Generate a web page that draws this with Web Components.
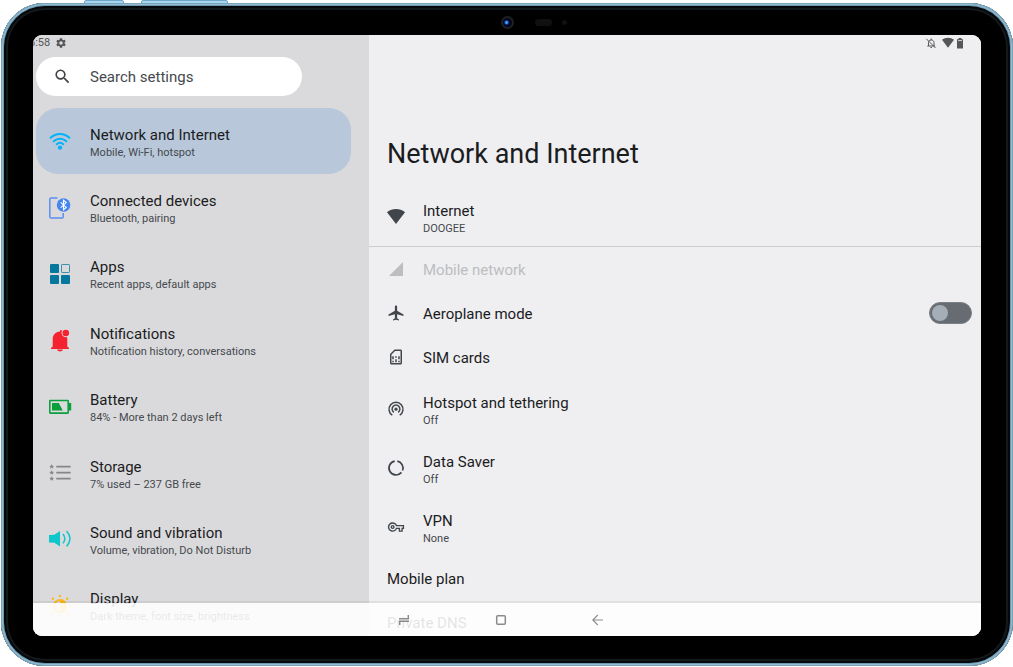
<!DOCTYPE html>
<html lang="en">
<head>
<meta charset="utf-8">
<meta name="viewport" content="width=device-width, initial-scale=1">
<title>Settings – Network and Internet</title>
<style>
  html, body { margin: 0; height: 100%; background: #fff; }
  body { font-family: Roboto, "Liberation Sans", sans-serif; color: #1b1c1e; overflow: hidden; }
</style>
</head>
<body>
<tablet-frame>
  <status-bar></status-bar>
  <settings-sidebar>
    <search-box></search-box>
    <category-item icon="wifi" heading="Network and Internet" note="Mobile, Wi-Fi, hotspot" selected></category-item>
    <category-item icon="devices" heading="Connected devices" note="Bluetooth, pairing"></category-item>
    <category-item icon="apps" heading="Apps" note="Recent apps, default apps"></category-item>
    <category-item icon="bell" heading="Notifications" note="Notification history, conversations"></category-item>
    <category-item icon="battery" heading="Battery" note="84% - More than 2 days left"></category-item>
    <category-item icon="storage" heading="Storage" note="7% used – 237 GB free"></category-item>
    <category-item icon="sound" heading="Sound and vibration" note="Volume, vibration, Do Not Disturb"></category-item>
    <category-item icon="display" heading="Display" note="Dark theme, font size, brightness"></category-item>
  </settings-sidebar>
  <settings-pane>
    <span slot="title">Network and Internet</span>
    <setting-row icon="internet" heading="Internet" note="DOOGEE" divider></setting-row>
    <setting-row icon="signal" heading="Mobile network" disabled></setting-row>
    <setting-switch icon="plane" heading="Aeroplane mode"></setting-switch>
    <setting-row icon="sim" heading="SIM cards"></setting-row>
    <setting-row icon="hotspot" heading="Hotspot and tethering" note="Off"></setting-row>
    <setting-row icon="data" heading="Data Saver" note="Off"></setting-row>
    <setting-row icon="vpn" heading="VPN" note="None"></setting-row>
    <setting-row heading="Mobile plan"></setting-row>
    <setting-row heading="Private DNS"></setting-row>
  </settings-pane>
  <nav-bar></nav-bar>
</tablet-frame>

<script>
const star = (y) => `<path fill="#868688" d="M3.7 ${y - 2.5}l.7 1.7 1.8.1-1.4 1.1.5 1.8-1.6-1-1.6 1 .5-1.8-1.4-1.1 1.8-.1z"/>`;

/* name: [viewBox size, markup] */
const ICONS = {
  gear: [24, '<path fill="currentColor" d="M19.14 12.94c.04-.3.06-.61.06-.94 0-.32-.02-.64-.07-.94l2.03-1.58c.18-.14.23-.41.12-.61l-1.92-3.32c-.12-.22-.37-.29-.59-.22l-2.39.96c-.5-.38-1.03-.7-1.62-.94l-.36-2.54c-.04-.24-.24-.41-.48-.41h-3.84c-.24 0-.43.17-.47.41l-.36 2.54c-.59.24-1.13.57-1.62.94l-2.39-.96c-.22-.08-.47 0-.59.22L2.74 8.87c-.12.21-.08.47.12.61l2.03 1.58c-.05.3-.09.63-.09.94s.02.64.07.94l-2.03 1.58c-.18.14-.23.41-.12.61l1.92 3.32c.12.22.37.29.59.22l2.39-.96c.5.38 1.03.7 1.62.94l.36 2.54c.05.24.24.41.48.41h3.84c.24 0 .44-.17.47-.41l.36-2.54c.59-.24 1.13-.56 1.62-.94l2.39.96c.22.08.47 0 .59-.22l1.92-3.32c.12-.22.07-.47-.12-.61l-2.01-1.58zM12 15.6a3.6 3.6 0 1 1 0-7.2 3.6 3.6 0 0 1 0 7.2z"/>'],
  search: [24, '<path fill="currentColor" d="M15.5 14h-.79l-.28-.27A6.47 6.47 0 0 0 16 9.5 6.5 6.5 0 1 0 9.5 16c1.61 0 3.09-.59 4.23-1.57l.27.28v.79l5 4.99L20.49 19l-4.99-5zm-6 0C7.01 14 5 11.99 5 9.5S7.01 5 9.5 5 14 7.01 14 9.5 11.99 14 9.5 14z"/>'],
  bellOff: [12, '<g fill="none" stroke="currentColor" stroke-width="1"><path d="M3.500 9V5.600C3.500 4 4.600 3 6.200 3S9 4 9 5.600V9M2.300 9h7.800M6.200 1.500V3M1.300 1.800l9.200 9.200"/></g><path fill="currentColor" d="M5.200 9.900h2a1 1 0 0 1-2 0z"/>'],
  statusBattery: [12, '<path fill="currentColor" d="M4.5 1h3v1.2H9v9.3H3V2.2h1.500z"/><path stroke="#efeff1" stroke-width=".8" d="M4 3.600h4"/>'],
  internet: [18, '<path fill="currentColor" d="M9 16L0 4.300C5 0 13 0 18 4.300z"/>'],
  wifi: [24, '<g fill="none" stroke="#03b3fa" stroke-width="2" stroke-linecap="round"><path d="M2.600 8.800c5.400-5.200 13.400-5.200 18.800 0M5.600 12.300c3.700-3.500 9.100-3.500 12.800 0M8.700 15.200c1.900-1.700 4.700-1.700 6.600 0"/></g><circle cx="12" cy="18.600" r="2.200" fill="#03b3fa"/>'],
  devices: [24, '<path fill="none" stroke="#5b8def" stroke-width="1.500" d="M9.500 1.900H3.200a1.400 1.400 0 0 0-1.400 1.400v17.400a1.400 1.400 0 0 0 1.400 1.400h10.600a1.400 1.400 0 0 0 1.400-1.400V17"/><circle cx="15.600" cy="9" r="6.800" fill="#4585f2"/><path fill="none" stroke="#fff" stroke-width="1.100" d="M12.700 6.400l5.500 5-2.700 2.300V4.300l2.700 2.300-5.500 5"/>'],
  apps: [24, '<g fill="#06779d"><rect x="2" y="2" width="9" height="9" rx="1"/><rect x="2" y="13" width="9" height="9" rx="1"/><rect x="13" y="13" width="9" height="9" rx="1"/></g><rect x="13.500" y="2.500" width="8" height="8" rx=".6" fill="none" stroke="#3d8fae"/>'],
  bell: [24, '<path fill="#f5222f" d="M12 3.500c-.2-1.800 1.700-2 2-.9a4.500 4.500 0 0 0 4.900 6.500c.3.500.4 1.200.4 2v7.400l1.700 1.600v.8H3v-.8l1.700-1.600V11c0-4 2.600-7 7.300-7.500zM9 21.600h6c-.6 1.500-1.700 1.900-3 1.900s-2.400-.4-3-1.900z"/><circle cx="17.800" cy="5" r="3.300" fill="#f5222f"/>'],
  battery: [24, '<rect x="1.800" y="5.500" width="18.400" height="12.600" rx=".5" fill="none" stroke="#0a9f3c" stroke-width="1.600"/><path fill="#0a9f3c" d="M20.500 8h2.700v7.600h-2.700zM4 7.900h6.800l4 7.700H4z"/>'],
  storage: [24, '<path stroke="#868688" stroke-width="1.700" d="M8.300 5.600h14.400M8.300 11.600h14.400M8.300 17.600h14.400"/>' + star(5.6) + star(11.6) + star(17.6)],
  sound: [24, '<path fill="#0fc6cb" d="M1 8l5.400-.3L12 4v15.400l-5.600-3.700L1 15.400z"/><g fill="none" stroke="#0fc6cb" stroke-width="1.500"><path d="M15 7c2.300 3 2.300 6.400 0 9.400M18.600 4c4.200 4.800 4.200 10.600 0 15.400"/></g>'],
  display: [24, '<g fill="#fbb91c"><circle cx="12" cy="2" r="1.200"/><circle cx="4.800" cy="4.700" r="1.200"/><circle cx="19.200" cy="4.700" r="1.200"/><circle cx="2" cy="12" r="1.200"/><circle cx="22" cy="12" r="1.200"/><circle cx="4.800" cy="19.300" r="1.200"/><circle cx="19.200" cy="19.300" r="1.200"/><circle cx="12" cy="22" r="1.200"/><path d="M12 5a7 7 0 0 1 0 14z"/></g><circle cx="12" cy="12" r="6" fill="none" stroke="#fbb91c" stroke-width="2"/>'],
  signal: [18, '<path fill="currentColor" d="M16 2v14H2z"/>'],
  plane: [24, '<path fill="currentColor" d="M22 16v-2l-8.500-5V3.500C13.500 2.670 12.830 2 12 2s-1.500.67-1.500 1.500V9L2 14v2l8.500-2.500V19L8 20.500V22l4-1 4 1v-1.500L13.500 19v-5.500L22 16z"/>'],
  sim: [24, '<path fill="currentColor" d="M18 2h-8L4 8v12c0 1.100.9 2 2 2h12c1.100 0 2-.9 2-2V4c0-1.100-.9-2-2-2zm0 18H6V8.830L10.830 4H18v16zM7 17h2v2H7zM15 17h2v2h-2zM7 11h2v4H7zM11 15h2v4h-2zM11 11h2v2h-2zM15 11h2v4h-2z"/>'],
  hotspot: [18, '<g fill="none" stroke="currentColor" stroke-width="1.500"><path d="M5.300 15.200a7 7 0 1 1 7.400 0M6.900 12.300a3.900 3.900 0 1 1 4.200 0"/></g><circle cx="9" cy="9.200" r="1.600" fill="currentColor"/>'],
  data: [18, '<g fill="none" stroke="currentColor" stroke-width="1.700"><path d="M10.300 2.100a7 7 0 0 1 5.200 9.400M14.400 13.400a7 7 0 1 1-6.700-11.300"/></g>'],
  vpn: [24, '<path fill="currentColor" d="M22 19h-6v-4h-2.680c-1.140 2.420-3.600 4-6.320 4-3.860 0-7-3.140-7-7s3.140-7 7-7c2.720 0 5.170 1.580 6.320 4H24v6h-2v4zm-4-2h2v-4h2v-2H11.940l-.23-.67C11.010 8.340 9.110 7 7 7c-2.760 0-5 2.240-5 5s2.240 5 5 5c2.110 0 4.010-1.340 4.710-3.330l.23-.67H18v4zM7 15c-1.650 0-3-1.350-3-3s1.350-3 3-3 3 1.350 3 3-1.350 3-3 3zm0-4c-.55 0-1 .45-1 1s.45 1 1 1 1-.45 1-1-.45-1-1-1z" transform="translate(1.200 1.200) scale(.9)"/>'],
  recents: [12, '<g fill="none" stroke="currentColor" stroke-width="1.500"><path d="M1 4.700h9.300V1M11 7.300H1.700V11"/></g>'],
  home: [12, '<rect x="1.700" y="1.700" width="8.600" height="8.600" rx="1" fill="none" stroke="currentColor" stroke-width="1.500"/>'],
  back: [12, '<path fill="none" stroke="currentColor" stroke-width="1.100" d="M11 6H.8M5.800 1l-5 5 5 5"/>']
};

class Base extends HTMLElement {
  constructor() { super(); this.attachShadow({ mode: 'open' }); }
  get text() { return { icon: this.getAttribute('icon'), heading: this.getAttribute('heading'), note: this.getAttribute('note') }; }
  connectedCallback() { this.shadowRoot.innerHTML = `<style>* { box-sizing: border-box; }</style>` + this.render(); }
}

class UiIcon extends Base {
  render() {
    const [size, art] = ICONS[this.getAttribute('name')];
    return `<style>:host { display: block; flex: none; width: var(--size, 24px); height: var(--size, 24px); } svg { display: block; width: 100%; height: 100%; }</style>
      <svg viewBox="0 0 ${size} ${size}" aria-hidden="true">${art}</svg>`;
  }
}

class TabletFrame extends Base {
  render() {
    return `<style>
      :host { display: block; height: 100%; box-sizing: border-box; padding: 3px 0 1px 1px; position: relative; }
      .key { position: absolute; top: 0; height: 8px; background: #a5d6f2; border: 1px solid #6fa6c4; border-radius: 2px; }
      .key.power { left: 84px; width: 40px; }
      .key.volume { left: 141px; width: 87px; }
      .body {
        position: relative; height: 100%; display: flex; flex-direction: column;
        padding: 0 32px 30px; border-radius: 44px; background: #000;
        box-shadow: inset 0 0 0 1px #7ba3b8, inset 0 0 0 2px #93bdd4, inset 0 0 0 3px #6c98b0, inset 0 0 0 5px #05090b, inset 0 0 0 7px #14191c;
      }
      .bezel { flex: 0 0 32px; display: grid; grid-template-columns: 1fr auto 1fr; align-items: center; padding-top: 6px; }
      .camera { grid-column: 2; width: 13px; height: 13px; border-radius: 50%; border: 2px solid #1d2024; background: radial-gradient(circle at 40% 50%, #3f9fe8 0 1px, #0b2f90 2px, #05071c 3px); }
      .sensors { display: flex; align-items: center; gap: 10px; padding-left: 21px; }
      .sensors i { width: 17px; height: 7px; border-radius: 4px; background: #0e1011; }
      .sensors i + i { width: 5px; height: 5px; }
      .screen { position: relative; flex: 1; min-height: 0; display: flex; overflow: hidden; border-radius: 9px; background: #efeff1; }
    </style>
    <div class="key power"></div><div class="key volume"></div>
    <div class="body">
      <div class="bezel"><div class="camera"></div><div class="sensors"><i></i><i></i></div></div>
      <div class="screen"><slot></slot></div>
    </div>`;
  }
}

class StatusBar extends Base {
  render() {
    return `<style>
      :host { position: absolute; inset: 0 0 auto; z-index: 1; display: flex; align-items: center; justify-content: space-between; height: 16px; padding-right: 15px; color: #555658; font-size: 11px; line-height: 16px; --size: 12px; }
      div { display: flex; align-items: center; }
      .left { gap: 5px; margin-left: -4px; }
      .wifi { margin-left: 5px; }
    </style>
    <div class="left"><time>6:58</time><ui-icon name="gear"></ui-icon></div>
    <div><ui-icon name="bellOff"></ui-icon><ui-icon class="wifi" name="internet"></ui-icon><ui-icon name="statusBattery"></ui-icon></div>`;
  }
}

class SettingsSidebar extends Base {
  render() {
    return `<style>
      :host { flex: 0 0 336px; display: flex; flex-direction: column; padding: 22px 18px 0 3px; box-sizing: border-box; background: #dadadc; }
      /* the last category scrolls under the navigation bar */
      nav { flex: 1; display: grid; grid-auto-rows: 1fr; margin: 12px 0 -3px; }
    </style>
    <slot name="search"></slot><nav aria-label="Settings categories"><slot></slot></nav>`;
  }
}

class SearchBox extends Base {
  connectedCallback() { this.slot = 'search'; super.connectedCallback(); }
  render() {
    return `<style>
      :host { display: block; width: 266px; --size: 19px; }
      label { display: flex; align-items: center; gap: 18px; height: 39px; padding: 0 16px 0 17px; border-radius: 20px; background: #fff; color: #3f4347; }
      input { flex: 1; min-width: 0; padding: 0; border: 0; outline: 0; background: none; color: inherit; font: 15px/20px Roboto, "Liberation Sans", sans-serif; }
      input::placeholder { color: #45494d; opacity: 1; }
    </style>
    <label><ui-icon name="search"></ui-icon><input type="search" placeholder="Search settings" aria-label="Search settings"></label>`;
  }
}

class CategoryItem extends Base {
  render() {
    const { icon, heading, note } = this.text;
    return `<style>
      :host { display: block; min-height: 0; }
      a { display: flex; align-items: center; gap: 18px; height: 100%; padding-left: 12px; border-radius: 22px; color: inherit; text-decoration: none; }
      :host([selected]) a { background: #b8c8da; }
      .text { padding-top: 2px; }
      b, small { display: block; font-weight: 400; white-space: nowrap; }
      b { font-size: 15px; line-height: 20px; }
      small { padding-top: 1px; font-size: 11px; line-height: 14px; color: #45494e; }
    </style>
    <a href="#${icon}"><ui-icon name="${icon}"></ui-icon><span class="text"><b>${heading}</b><small>${note}</small></span></a>`;
  }
}

class SettingsPane extends Base {
  render() {
    return `<style>
      :host { flex: 1; min-width: 0; display: block; background: #efeff1; }
      h1 { margin: 0; padding: 103px 18px 18px; font-size: 27px; line-height: 32px; font-weight: 400; }
    </style>
    <main><h1><slot name="title"></slot></h1><slot></slot></main>`;
  }
}

const ROW_STYLE = `
  :host { display: block; --size: 18px; }
  .row { display: flex; align-items: center; gap: 18px; width: 100%; height: 44px; margin: 0; padding: 0 9px 0 18px; border: 0; background: none; color: inherit; font: 15px/20px Roboto, "Liberation Sans", sans-serif; text-align: left; }
  ui-icon { color: #41464d; }
  .text { flex: 1; padding-top: 1px; }
  small { display: block; padding-top: 1px; font-size: 11px; line-height: 14px; color: #45494e; }`;

class SettingRow extends Base {
  render() {
    const { icon, heading, note } = this.text;
    return `<style>${ROW_STYLE}
      .row.tall { height: 59px; }
      .tall .text { padding-top: 3px; }
      .row:disabled, .row:disabled ui-icon { color: #bcbdc0; }
      :host([divider]) .row { border-bottom: 1px solid #cbccce; }
    </style>
    <button type="button" class="row ${note ? 'tall' : ''}" ${this.hasAttribute('disabled') ? 'disabled' : ''}>
      ${icon ? `<ui-icon name="${icon}"></ui-icon>` : ''}<span class="text">${heading}${note ? `<small>${note}</small>` : ''}</span>
    </button>`;
  }
}

class SettingSwitch extends Base {
  render() {
    const { icon, heading } = this.text;
    return `<style>${ROW_STYLE}
      input { appearance: none; flex: none; width: 43px; height: 22px; margin: 0; padding: 2px; border: 1px solid #7b7f86; border-radius: 11px; background: #676b72; }
      input::before { content: ""; display: block; width: 16px; height: 16px; border-radius: 50%; background: #a5adb6; }
      input:checked::before { margin-left: auto; }
    </style>
    <label class="row"><ui-icon name="${icon}"></ui-icon><span class="text">${heading}</span><input type="checkbox" role="switch"></label>`;
  }
}

class NavBar extends Base {
  render() {
    return `<style>
      :host { position: absolute; inset: auto 0 0; display: flex; align-items: center; justify-content: center; gap: 73px; height: 35px; box-sizing: border-box; padding-right: 12px; border-top: 2px solid rgba(0, 0, 0, .06); background: rgba(255, 255, 255, .88) padding-box; --size: 12px; }
      button { display: grid; place-items: center; width: 24px; height: 24px; padding: 0; border: 0; background: none; color: #8b8b8b; }
    </style>
    <button type="button" aria-label="Recent apps"><ui-icon name="recents"></ui-icon></button>
    <button type="button" aria-label="Home"><ui-icon name="home"></ui-icon></button>
    <button type="button" aria-label="Back"><ui-icon name="back"></ui-icon></button>`;
  }
}

customElements.define('ui-icon', UiIcon);
customElements.define('tablet-frame', TabletFrame);
customElements.define('status-bar', StatusBar);
customElements.define('settings-sidebar', SettingsSidebar);
customElements.define('search-box', SearchBox);
customElements.define('category-item', CategoryItem);
customElements.define('settings-pane', SettingsPane);
customElements.define('setting-row', SettingRow);
customElements.define('setting-switch', SettingSwitch);
customElements.define('nav-bar', NavBar);
</script>
</body>
</html>
